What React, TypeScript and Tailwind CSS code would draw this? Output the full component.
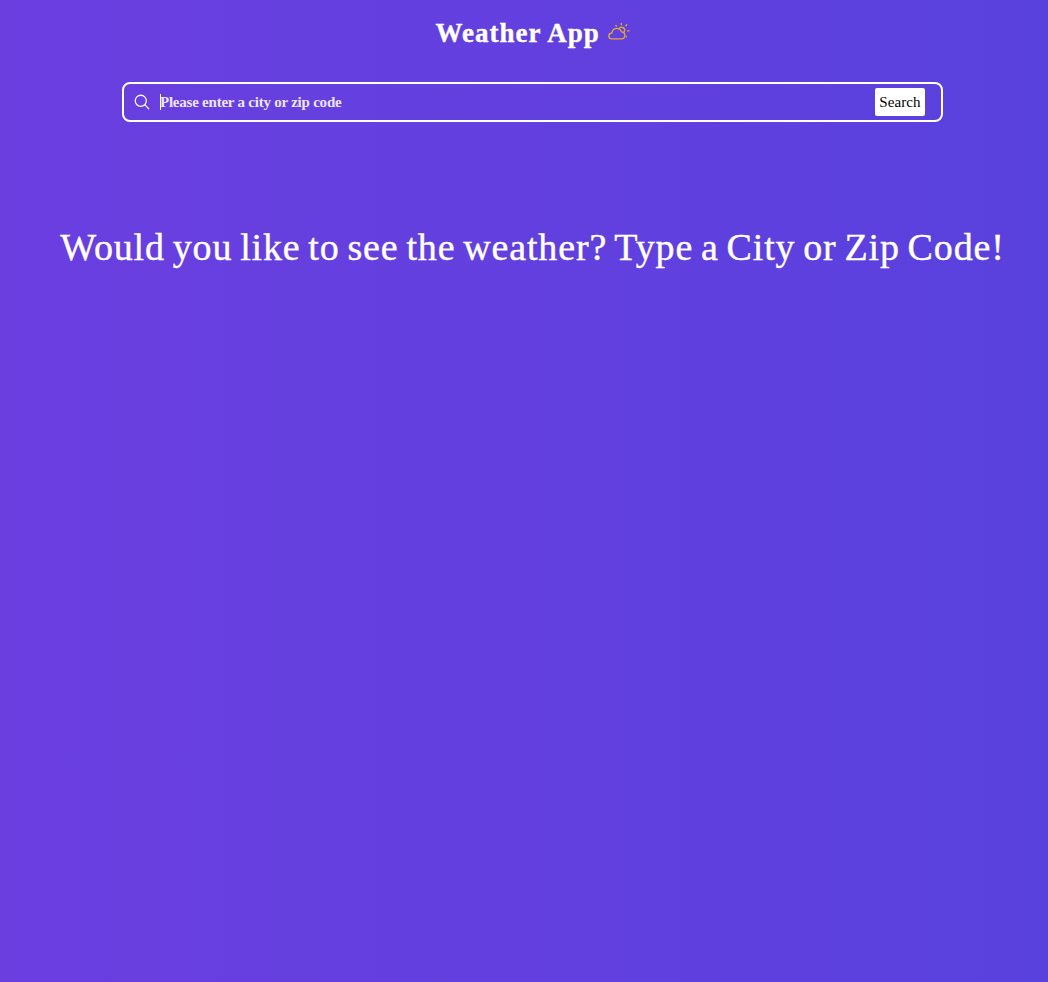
import { IoSearchOutline } from 'react-icons/io5';

function PartlySunny() {
  return (
    <svg viewBox="0 0 22 18" className="h-[18px] w-[22px] shrink-0 text-[#dca934]" fill="none" stroke="currentColor" strokeWidth="1.35" strokeLinecap="round" strokeLinejoin="round">
      <path d="M4 16.9C2 16.9.8 15.6.8 14c0-1.7 1.2-2.8 3-3C4.4 8.3 6.2 6.4 8.8 6.4c2.3 0 4 1.3 4.7 3.5 2 .1 3.3 1.5 3.3 3.4 0 2.1-1.3 3.6-3.4 3.6Z" />
      <path d="M10.9 6.8c.5-1 1.5-1.6 2.7-1.6 1.8 0 3.1 1.3 3.1 3 0 1.2-.5 2-1.4 2.5" />
      <path d="M13.3 1.3v1.5M7.8 3.4l.6.6M18.7 2.8l-.8.9M19.5 8.8h1.5M18 14.3l.4.4" />
    </svg>
  );
}

export default function App() {
  return (
    <main className="flex min-h-screen flex-col items-center bg-linear-to-r from-[#6b3ee0] to-[#5941dd] pl-[17px] font-['Georgia','Liberation_Serif',serif] text-white">
      <header className="mt-[15px] flex h-9 items-start gap-2">
        <h1 className="w-[164px] text-[27px] leading-9 font-bold tracking-[1px] whitespace-nowrap [-webkit-text-stroke:0.4px_white]">Weather App</h1>
        <span className="mt-[7px]"><PartlySunny /></span>
      </header>
      <form className="mt-[31px] flex h-10 w-[821px] items-center rounded-lg border-2 border-white pr-4 pl-[9px]" onSubmit={(e) => e.preventDefault()}>
        <IoSearchOutline className="size-[18px] shrink-0 [&_*]:[stroke-width:36px]" />
        <div className="ml-[9px] flex flex-1 items-center">
          <span className="-mr-px h-4 w-px bg-white" />
          <span className="text-[15px] leading-5 font-bold tracking-[-0.23px] whitespace-nowrap text-[#ece6fb]">Please enter a city or zip code</span>
        </div>
        <button className="h-7 w-[50px] rounded-xs bg-white text-[15px] leading-5 tracking-[0.1px] text-black">Search</button>
      </form>
      <p className="mt-[101px] text-[38px] leading-12 tracking-[0.85px] whitespace-nowrap [word-spacing:-2.5px] [-webkit-text-stroke:0.4px_white]">Would you like to see the weather? Type a City or Zip Code!</p>
    </main>
  );
}
